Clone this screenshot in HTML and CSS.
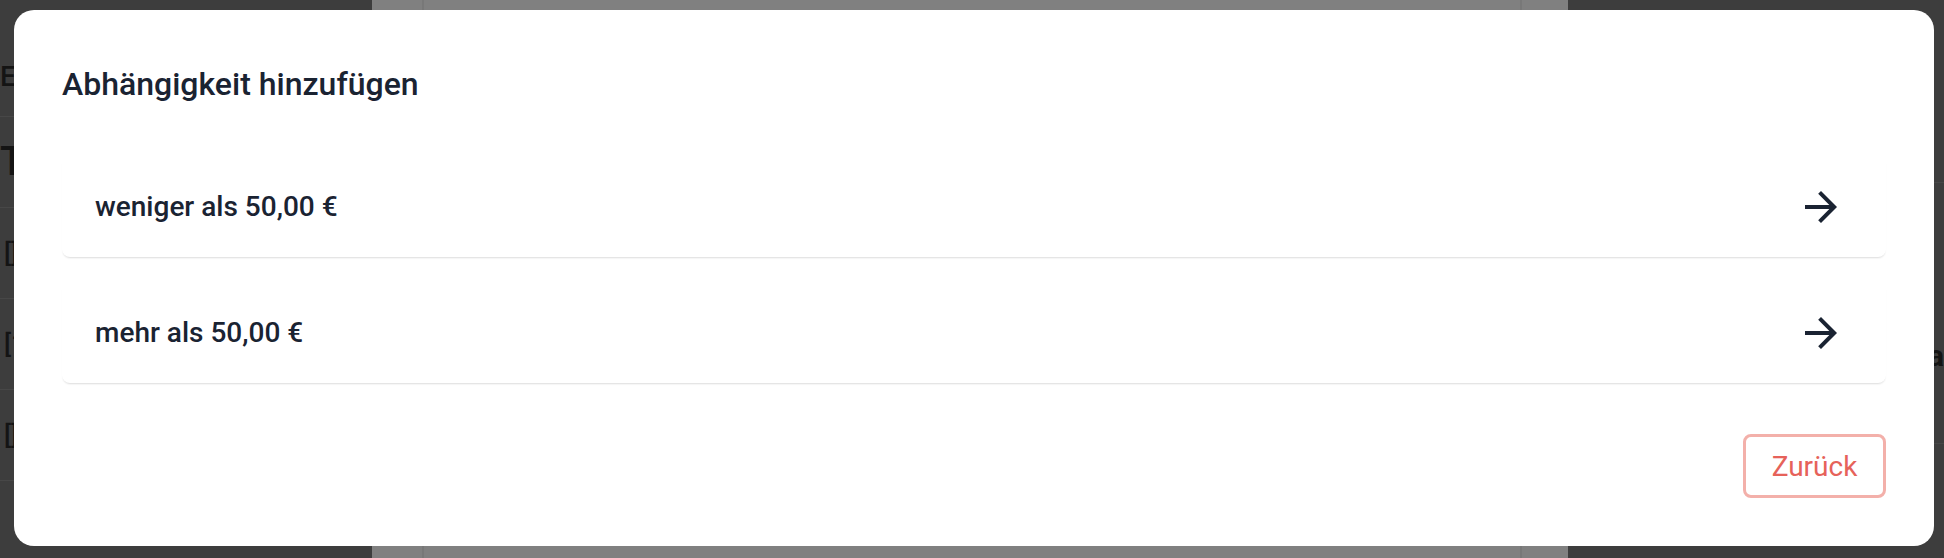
FILE: index.html
```html
<!DOCTYPE html>
<html lang="de">
<head>
<meta charset="utf-8">
<title>Abhängigkeit hinzufügen</title>
<link rel="stylesheet" href="styles.css">
</head>
<body>
<div class="backdrop">
  <div class="side side-left">
    <div class="frag frag-es">Es</div>
    <div class="rule"></div>
    <div class="frag frag-t">T</div>
    <div class="rule"></div>
    <div class="frag frag-ico">[]</div>
    <div class="rule"></div>
    <div class="frag frag-ico">[1</div>
    <div class="rule"></div>
    <div class="frag frag-ico">[]</div>
    <div class="rule"></div>
  </div>
  <div class="mid"><div class="mid-inner"></div></div>
  <div class="side side-right">
    <div class="rule rule-r1"></div>
    <div class="frag frag-a">a</div>
    <div class="rule rule-r2"></div>
  </div>
</div>

<div class="modal" role="dialog" aria-labelledby="dlg-title">
  <h2 class="modal-title" id="dlg-title">Abhängigkeit hinzufügen</h2>
  <div class="options">
    <div class="option">
      <span class="option-label">weniger als 50,00 €</span>
      <svg class="option-arrow" viewBox="0 0 24 24" aria-hidden="true"><path d="M12 4l-1.41 1.41L16.17 11H4v2h12.17l-5.58 5.59L12 20l8-8z"/></svg>
    </div>
    <div class="option">
      <span class="option-label">mehr als 50,00 €</span>
      <svg class="option-arrow" viewBox="0 0 24 24" aria-hidden="true"><path d="M12 4l-1.41 1.41L16.17 11H4v2h12.17l-5.58 5.59L12 20l8-8z"/></svg>
    </div>
  </div>
  <div class="actions">
    <button class="btn-back" type="button">Zurück</button>
  </div>
</div>
</body>
</html>
```
FILE: styles.css
```css
* { box-sizing: border-box; }

html, body {
  margin: 0;
  padding: 0;
}

body {
  width: 1944px;
  height: 558px;
  overflow: hidden;
  background: #3d3d3d;
  font-family: Roboto, "Liberation Sans", Arial, sans-serif;
  position: relative;
}

/* ---------- dimmed page behind the dialog ---------- */
.backdrop {
  display: flex;
  height: 558px;
}

.side-left {
  width: 374px;
  display: flex;
  flex-direction: column;
  padding-top: 62px;
}

.frag {
  color: #141414;
  font-weight: 500;
  font-size: 28px;
  line-height: 30px;
}

.frag-es { height: 54px; }
.frag-t { font-size: 40px; height: 90px; padding-top: 30px; }
.frag-ico { height: 90px; padding-top: 30px; font-size: 26px; padding-left: 4px; }

.rule {
  height: 1px;
  background: #474747;
}

.mid {
  width: 1200px;
  background: #808080;
  display: flex;
  padding: 0 46px 0 50px;
}

.mid-inner {
  flex: 1;
  border-left: 2px solid #787878;
  border-right: 2px solid #787878;
}

.side-right {
  flex: 1;
  display: flex;
  flex-direction: column;
  padding-left: 360px;
}

.rule-r1 { margin-top: 182px; }
.frag-a { margin-top: 158px; font-size: 30px; font-weight: 700; }
.rule-r2 { margin-top: 72px; }

/* ---------- dialog ---------- */
.modal {
  position: absolute;
  left: 14px;
  top: 10px;
  width: 1920px;
  height: 536px;
  background: #ffffff;
  border-radius: 20px;
  padding: 56px 48px 48px;
  display: flex;
  flex-direction: column;
}

.modal-title {
  margin: 0;
  font-size: 32px;
  line-height: 36px;
  font-weight: 500;
  color: #1a2332;
}

.options {
  margin-top: 54px;
  display: flex;
  flex-direction: column;
  gap: 25px;
}

.option {
  height: 101px;
  display: flex;
  align-items: center;
  justify-content: space-between;
  padding: 0 41px 0 33px;
  background: #ffffff;
  border-radius: 8px;
  box-shadow: 0 2px 2px -1px rgba(0, 0, 0, 0.14);
}

.option-label {
  font-size: 28px;
  font-weight: 500;
  color: #1a2332;
}

.option-arrow {
  width: 48px;
  height: 48px;
  fill: #1a2332;
}

.actions {
  margin-top: 51px;
  display: flex;
  justify-content: flex-end;
}

.btn-back {
  height: 64px;
  width: 143px;
  padding: 0;
  background: #ffffff;
  border: 3px solid #f3b0aa;
  border-radius: 8px;
  font-family: Roboto, "Liberation Sans", Arial, sans-serif;
  font-size: 28px;
  font-weight: 400;
  color: #e6625a;
}
```
